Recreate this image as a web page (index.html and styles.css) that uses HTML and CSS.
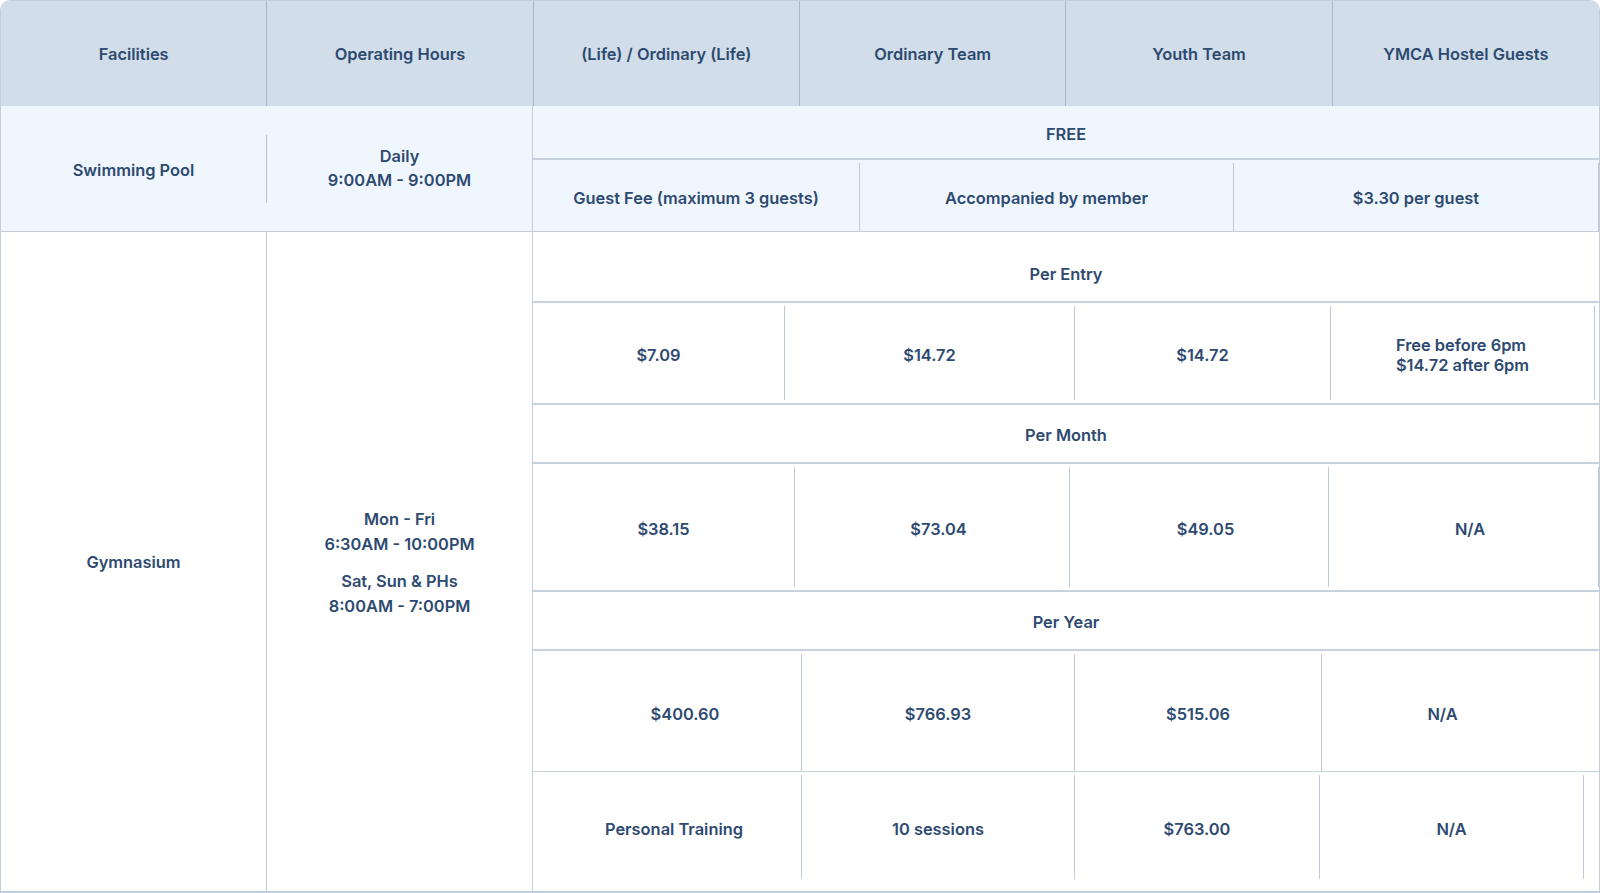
FILE: index.html
```html
<!DOCTYPE html>
<html lang="en">
<head>
<meta charset="utf-8">
<title>Facilities Fees</title>
<link rel="stylesheet" href="styles.css">
</head>
<body>
<div class="table">
  <div class="thead">
    <div class="th">Facilities</div>
    <div class="th">Operating Hours</div>
    <div class="th">(Life) / Ordinary (Life)</div>
    <div class="th">Ordinary Team</div>
    <div class="th">Youth Team</div>
    <div class="th">YMCA Hostel Guests</div>
  </div>

  <div class="row pool">
    <div class="cell fac fac-short">Swimming Pool</div>
    <div class="cell hours">
      <p>Daily<br>9:00AM - 9:00PM</p>
    </div>
    <div class="nested">
      <div class="sub-label free">FREE</div>
      <div class="vals guest-row">
        <div class="v">Guest Fee (maximum 3 guests)</div>
        <div class="v">Accompanied by member</div>
        <div class="v">$3.30 per guest</div>
      </div>
    </div>
  </div>

  <div class="row gym">
    <div class="cell fac fac-full">Gymnasium</div>
    <div class="cell hours hours-full">
      <p>Mon - Fri<br>6:30AM - 10:00PM</p>
      <p>Sat, Sun &amp; PHs<br>8:00AM - 7:00PM</p>
    </div>
    <div class="nested">
      <div class="sub-label entry-label">Per Entry</div>
      <div class="vals entry-row">
        <div class="v">$7.09</div>
        <div class="v">$14.72</div>
        <div class="v">$14.72</div>
        <div class="v"><span class="multi">Free before 6pm<br>$14.72 after 6pm</span></div>
        <div class="filler"></div>
      </div>
      <div class="sub-label month-label">Per Month</div>
      <div class="vals month-row">
        <div class="v">$38.15</div>
        <div class="v shift">$73.04</div>
        <div class="v shift">$49.05</div>
        <div class="v shift">N/A</div>
      </div>
      <div class="sub-label year-label">Per Year</div>
      <div class="vals year-row">
        <div class="v shift-r">$400.60</div>
        <div class="v">$766.93</div>
        <div class="v">$515.06</div>
        <div class="v shift-l">N/A</div>
      </div>
      <div class="vals pt-row">
        <div class="v shift-s">Personal Training</div>
        <div class="v">10 sessions</div>
        <div class="v">$763.00</div>
        <div class="v">N/A</div>
        <div class="filler"></div>
      </div>
    </div>
  </div>
</div>
</body>
</html>
```

FILE: styles.css
```css
* { box-sizing: border-box; }

html, body {
  margin: 0;
  padding: 0;
  background: #ffffff;
}

body {
  font-family: Inter, "Noto Sans", "Liberation Sans", sans-serif;
  font-size: 16.4px;
  font-weight: 600;
  color: #2e4a70;
  width: 1600px;
  height: 893px;
  overflow: hidden;
}

.table {
  width: 1600px;
  height: 893px;
  border: 1px solid #c3cedb;
  border-bottom: none;
  border-radius: 11px 11px 0 0;
  overflow: hidden;
  display: flex;
  flex-direction: column;
}

/* header */
.thead {
  display: grid;
  grid-template-columns: repeat(6, 1fr);
  height: 105px;
  background: #d1dde8;
  flex: none;
}

.th {
  display: flex;
  align-items: center;
  justify-content: center;
  text-align: center;
  border-right: 1px solid #a9b9cb;
}

.th:last-child { border-right: none; }

/* body rows */
.row {
  display: grid;
  grid-template-columns: 266px 266px 1fr;
  border-bottom: 1px solid #c3cedb;
  flex: none;
}

.pool {
  height: 126px;
  background: #f0f6fe;
}

.gym {
  flex: 1;
  border-bottom: 2px solid #c3cedb;
}

.cell {
  display: flex;
  align-items: center;
  justify-content: center;
  text-align: center;
}

.cell p {
  margin: 0;
  line-height: 24.5px;
}

.fac-short {
  align-self: center;
  height: 68px;
  padding-top: 2px;
  border-right: 1px solid #b7c4d4;
}

.fac-full {
  border-right: 1px solid #c3cedb;
}

.hours {
  flex-direction: column;
  gap: 13px;
  border-right: 1px solid #c3cedb;
}

.hours-full {
  padding-top: 2px;
}

.pool .hours {
  padding-bottom: 2px;
}

/* nested area */
.nested {
  display: flex;
  flex-direction: column;
}

.sub-label {
  display: flex;
  align-items: center;
  justify-content: center;
  border-bottom: 2px solid #c8d2de;
  flex: none;
}

.free { height: 54px; padding-top: 4px; }
.entry-label { height: 71px; padding-top: 15px; }
.month-label { height: 59px; padding-top: 3px; }
.year-label { height: 59px; padding-top: 3px; }

.vals {
  display: grid;
  border-bottom: 2px solid #c8d2de;
  flex: none;
}

.vals:last-child { border-bottom: none; }

.v {
  display: flex;
  align-items: center;
  justify-content: center;
  text-align: center;
  border-right: 1px solid #bfcad8;
  margin: 3px 0;
}

.guest-row {
  height: 72px;
  grid-template-columns: 327px 374px 1fr;
  border-bottom: none;
}

.guest-row .v { margin: 3px 0 0; padding-top: 1px; }

.entry-row {
  height: 102px;
  grid-template-columns: 252px 290px 256px 264px 1fr;
}

.entry-row .v { padding-top: 4px; }

.month-row {
  height: 128px;
  grid-template-columns: 262px 275px 259px 1fr;
}

.month-row .v { padding-top: 4px; }

.year-row {
  height: 121px;
  grid-template-columns: 269px 273px 247px 1fr;
  border-bottom-width: 1px;
}

.year-row .v { margin: 3px 0 0; padding-top: 3px; }
.year-row .v:last-child { border-right: none; }

.pt-row {
  flex: 1;
  grid-template-columns: 269px 273px 245px 264px 1fr;
}

.pt-row .v { margin: 3px 0 12px; padding-top: 4px; }

.multi {
  display: inline-block;
  text-align: left;
  line-height: 20px;
}

.shift { padding-left: 13px; }
.shift-r { padding-left: 36px; }
.shift-l { padding-right: 36px; }
.shift-s { padding-left: 14px; }

.filler { }
```
